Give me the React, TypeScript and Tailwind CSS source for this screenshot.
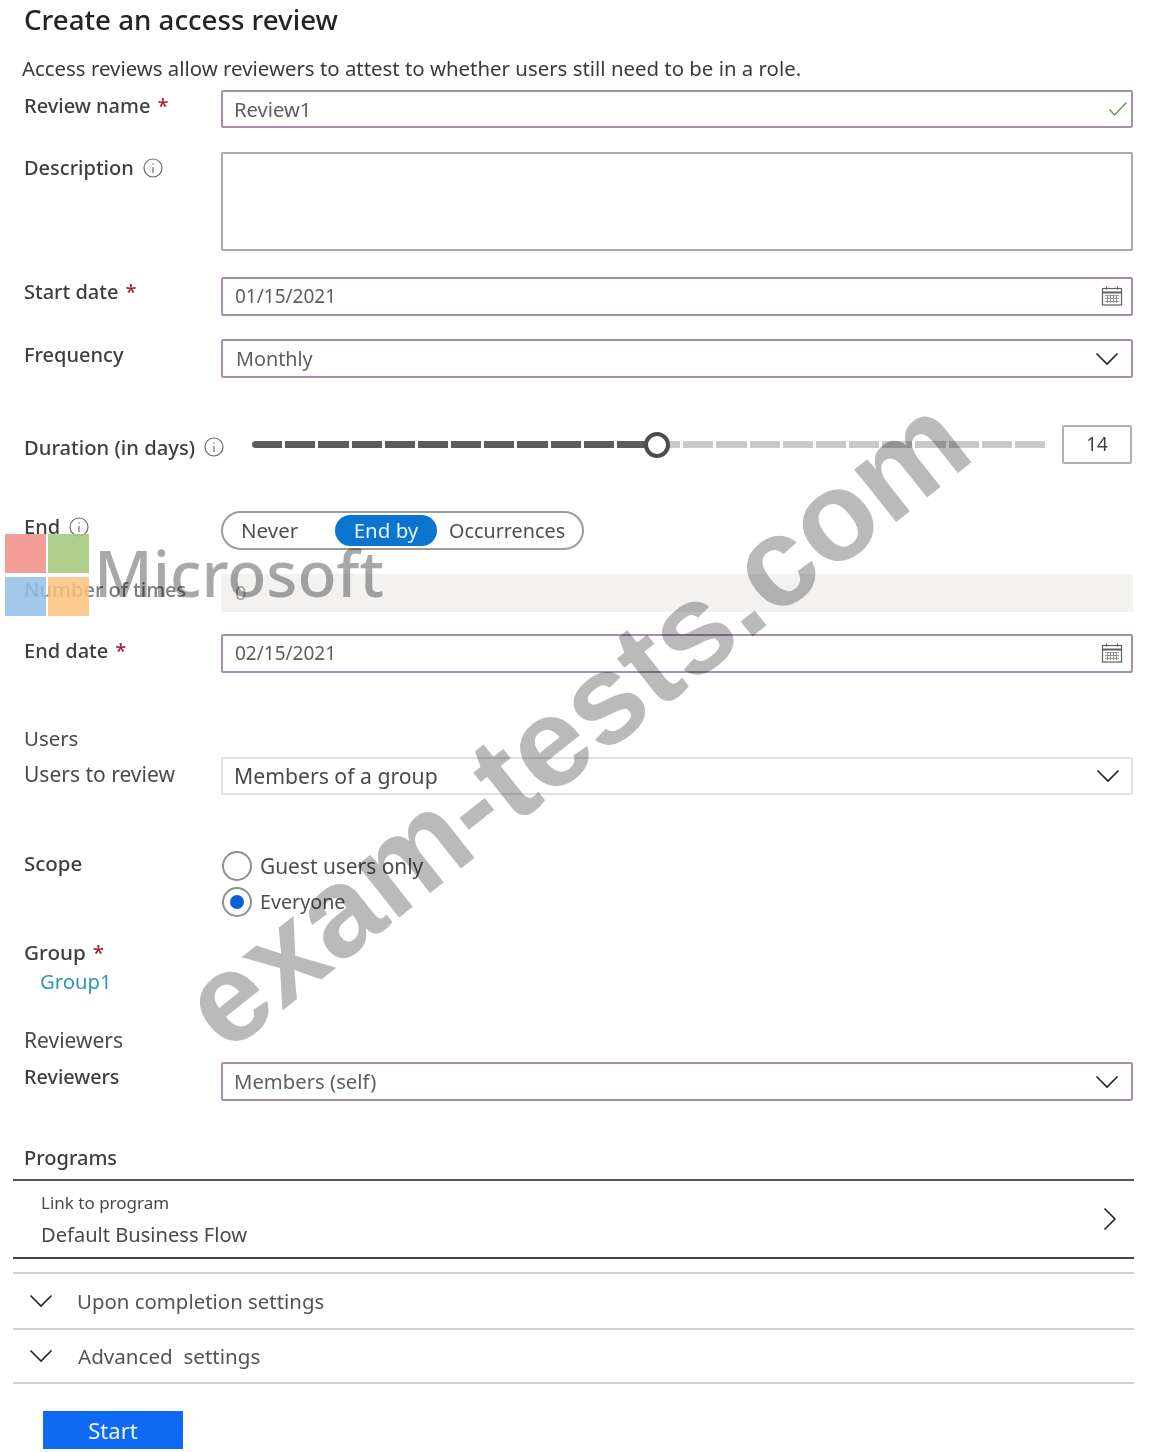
import type { ReactNode } from "react";

const InfoIcon = () => (
  <svg width="20" height="20" viewBox="0 0 20 20" fill="none" stroke="#6b6b6b" className="shrink-0">
    <circle cx="10" cy="10" r="9" strokeWidth="1.2" />
    <path d="M10 9v6" strokeWidth="1.2" />
    <circle cx="10" cy="6" r="0.8" fill="#6b6b6b" stroke="none" />
  </svg>
);

const CalendarIcon = () => (
  <svg width="22" height="20" viewBox="0 0 22 20" fill="none" stroke="#5f5f5f" strokeWidth="1.2" className="shrink-0 -translate-y-px">
    <rect x="1.5" y="2.5" width="19" height="16.5" />
    <path d="M1.5 6.5h19" strokeWidth="2" />
    <path d="M5.5 0.5v3M16.5 0.5v3" />
    <path d="M4 9.5h14M4 12.5h14M4 15.5h14M6.5 9v8M9.5 9v8M12.5 9v8M15.5 9v8" strokeWidth="0.9" stroke="#8a8a8a" />
  </svg>
);

const CheckIcon = () => (
  <svg width="20" height="16" viewBox="0 0 20 16" fill="none" stroke="#6a9a3a" strokeWidth="1.5" className="shrink-0">
    <path d="M1.5 8.5l5 5.5L18.5 1.5" />
  </svg>
);

const Chevron = ({ className = "" }: { className?: string }) => (
  <svg width="24" height="14" viewBox="0 0 24 14" fill="none" stroke="#222222" strokeWidth="1.6" className={`shrink-0 ${className}`}>
    <path d="M1.5 1.5L12 12L22.5 1.5" />
  </svg>
);

const Required = () => <span className="ml-[7px] text-[#a4262c]">*</span>;

const Row = ({ label, labelTop, className, children }: { label: ReactNode; labelTop: string; className: string; children: ReactNode }) => (
  <div className={`flex items-start pl-6 pr-[29px] ${className}`}>
    <div className={`w-[197px] shrink-0 flex items-center whitespace-nowrap text-[20px] leading-[28px] font-medium text-[#3f3e3d] ${labelTop}`}>{label}</div>
    <div className="flex-1">{children}</div>
  </div>
);

const Field = ({ children, icon, className }: { children: ReactNode; icon: ReactNode; className: string }) => (
  <div className={`flex items-center justify-between rounded-[2px] border-2 border-[#a78dae] text-[#605e5c] ${className}`}>
    <span>{children}</span>
    {icon}
  </div>
);

export default function App() {
  return (
    <div className="relative w-[1162px] h-[1452px] overflow-hidden bg-white font-['Noto_Sans',sans-serif]">
      <h1 className="pl-6 h-[38px] text-[27.7px] leading-[38px] font-medium text-[#252423]">Create an access review</h1>
      <p className="pl-[22px] mt-[15px] h-[30px] text-[20.4px] leading-[30px] text-[#3b3a39]">
        Access reviews allow reviewers to attest to whether users still need to be in a role.
      </p>

      <Row label={<>Review name<Required /></>} labelTop="pt-0.5" className="mt-[7px]">
        <Field className="h-[38px] pl-[11px] pr-[3px] text-[20.2px]" icon={<CheckIcon />}>Review1</Field>
      </Row>

      <Row label={<>Description<span className="ml-[9px]"><InfoIcon /></span></>} labelTop="pt-0.5" className="mt-6">
        <div className="h-[99px] rounded-[2px] border-2 border-[#a9a9a9]" />
      </Row>

      <Row label={<>Start date<Required /></>} labelTop="pt-px" className="mt-[26px]">
        <Field className="h-[39px] pl-3 pr-2 text-[19px]" icon={<CalendarIcon />}>01/15/2021</Field>
      </Row>

      <Row label="Frequency" labelTop="pt-0.5" className="mt-[23px]">
        <Field className="h-[39px] pl-[13px] pr-[12px] text-[19.8px]" icon={<Chevron />}>Monthly</Field>
      </Row>

      <Row
        label={<><span className="text-[20.2px]">Duration (in days)</span><span className="ml-[9px]"><InfoIcon /></span></>}
        labelTop="pt-[8px]"
        className="mt-[47px]"
      >
        <div className="flex items-center pl-[31px]">
          <div className="relative flex w-[793px] gap-[3px]">
            {Array.from({ length: 24 }).map((_, i) => (
              <div
                key={i}
                className={`h-[7px] flex-1 first:rounded-l-full last:rounded-r-full ${i < 12 ? "bg-[#5c5c5c]" : "bg-[#c9c9c9]"}`}
              />
            ))}
            <div className="absolute left-[392px] top-[-9px] size-[26px] rounded-full border-4 border-[#4d4d4d] bg-white" />
          </div>
          <div className="ml-[17px] flex h-[39px] w-[70px] items-center justify-center rounded-[2px] border-2 border-[#b1b1b1] text-[19px] text-[#444444]">14</div>
        </div>
      </Row>

      <Row label={<>End<span className="ml-[9px]"><InfoIcon /></span></>} labelTop="pt-0.5" className="mt-[47px]">
        <div className="flex h-[39px] w-[363px] items-center rounded-full border-2 border-[#9c9c9c] pl-[18px] text-[20.5px] text-[#4f4e4d]">
          <span className="w-[94px]">Never</span>
          <span className="flex h-[31px] w-[102px] items-center justify-center rounded-full bg-[#0a74cf] text-[#e6f2fb]">End by</span>
          <span className="ml-3 text-[19.8px]">Occurrences</span>
        </div>
      </Row>

      <Row label={<span className="text-[#7d7d7d]">Number of times</span>} labelTop="pt-[2px]" className="mt-6">
        <div className="flex h-[38px] items-center bg-[#f3f2f1] pl-3.5 text-[20px] text-[#a0a0a0]">0</div>
      </Row>

      <Row label={<>End date<Required /></>} labelTop="pt-[3px]" className="mt-[22px]">
        <Field className="h-[39px] pl-3 pr-2 text-[19px]" icon={<CalendarIcon />}>02/15/2021</Field>
      </Row>

      <p className="pl-6 mt-[51px] h-7 text-[20.4px] leading-7 text-[#4a4948]">Users</p>

      <Row label={<span className="text-[21px] font-normal text-[#4a4948]">Users to review</span>} labelTop="pt-[3px]" className="mt-[5px]">
        <Field className="h-[38px] !border-[#e1e1e1] pl-[11px] pr-[11px] text-[21.2px] !text-[#4a4948]" icon={<Chevron />}>Members of a group</Field>
      </Row>

      <Row label={<span className="text-[20.5px]">Scope</span>} labelTop="pt-px" className="mt-[53px]">
        <div className="mt-[3px] flex flex-col gap-[6px] leading-7 text-[#4f4e4d]">
          <div className="flex items-center gap-2 pl-px text-[20.9px]">
            <span className="size-[30px] rounded-full border-2 border-[#8f8f8f]" />
            Guest users only
          </div>
          <div className="flex items-center gap-2 pl-px text-[19.7px]">
            <span className="flex size-[30px] items-center justify-center rounded-full border-2 border-[#8f8f8f]">
              <span className="size-3.5 rounded-full bg-[#0a5fd8]" />
            </span>
            Everyone
          </div>
        </div>
      </Row>

      <p className="pl-6 mt-[21px] h-7 text-[20.7px] leading-7 font-medium text-[#3f3e3d]">Group<Required /></p>
      <p className="pl-10 mt-px h-7 text-[20.3px] leading-7 text-[#2e97b5]">Group1</p>
      <p className="pl-6 mt-[31px] h-7 text-[21px] leading-7 text-[#4a4948]">Reviewers</p>

      <Row label={<span className="text-[19.8px]">Reviewers</span>} labelTop="pt-0" className="mt-[9px]">
        <Field className="h-[39px] pl-[11px] pr-[12px] mt-[-1px] text-[20.3px]" icon={<Chevron />}>Members (self)</Field>
      </Row>

      <div className="pl-[13px] pr-7 mt-[41px]">
        <p className="pl-[11px] pt-0.5 h-[39px] border-b-2 border-[#555555] text-[20px] leading-7 font-medium text-[#3f3e3d]">Programs</p>
        <div className="flex h-[78px] items-center justify-between border-b-2 border-[#444444] pl-7 pr-[17px]">
          <div>
            <p className="text-[17px] leading-[26px] text-[#4a4948]">Link to program</p>
            <p className="mt-[5px] text-[20.1px] leading-7 text-[#4a4948]">Default Business Flow</p>
          </div>
          <svg width="14" height="24" viewBox="0 0 14 24" fill="none" stroke="#222222" strokeWidth="1.6" className="shrink-0">
            <path d="M1.5 1.5L12 12L1.5 22.5" />
          </svg>
        </div>
        <div className="mt-[13px] flex h-[58px] items-center border-y-2 border-[#d2d2d2] pl-4 text-[20.4px] text-[#555453]">
          <Chevron className="mr-[24px]" />
          Upon completion settings
        </div>
        <div className="flex h-[54px] items-center border-b-2 border-[#d2d2d2] pl-4 text-[20.6px] text-[#555453]">
          <Chevron className="mr-[25px]" />
          Advanced&nbsp; settings
        </div>
        <button className="mt-[27px] ml-[30px] h-[38px] w-[140px] bg-[#0f69f2] text-[22px] text-[#f0f6ff]">Start</button>
      </div>

      {/* watermarks */}
      <div className="absolute left-[5px] top-[534px] grid grid-cols-[41px_41px] grid-rows-[39px_39px] gap-x-[2px] gap-y-[4px] opacity-85">
        <div className="bg-[#f28f86]" />
        <div className="bg-[#a2c87a]" />
        <div className="bg-[#93bfe6]" />
        <div className="bg-[#fdc17c]" />
      </div>
      <div className="absolute left-[94px] top-[528px] text-[64px] leading-[90px] font-medium text-[#a8a8a8] mix-blend-multiply whitespace-nowrap">Microsoft</div>
      <div className="absolute left-[575px] top-[722px] -translate-x-1/2 -translate-y-1/2 -rotate-[38.5deg] whitespace-nowrap font-['Liberation_Sans',sans-serif] text-[127px] leading-none font-bold text-[#bababa] mix-blend-multiply">
        exam-tests.com
      </div>
    </div>
  );
}
